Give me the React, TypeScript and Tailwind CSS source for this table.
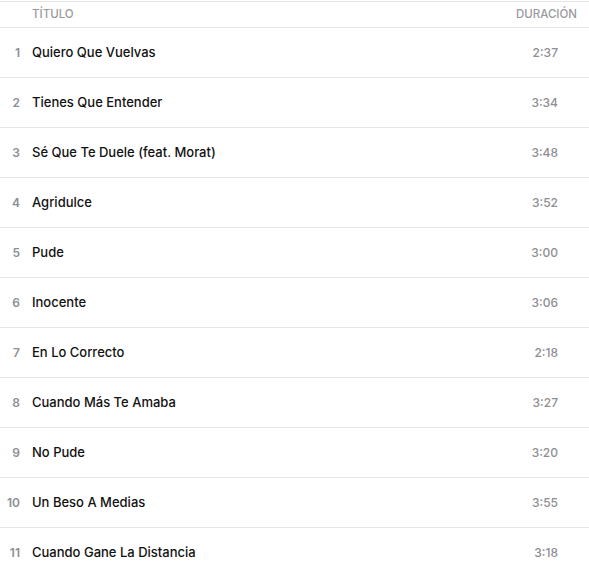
import React from 'react';

const tracks = [
  { n: 1, title: 'Quiero Que Vuelvas', time: '2:37' },
  { n: 2, title: 'Tienes Que Entender', time: '3:34' },
  { n: 3, title: 'Sé Que Te Duele (feat. Morat)', time: '3:48' },
  { n: 4, title: 'Agridulce', time: '3:52' },
  { n: 5, title: 'Pude', time: '3:00' },
  { n: 6, title: 'Inocente', time: '3:06' },
  { n: 7, title: 'En Lo Correcto', time: '2:18' },
  { n: 8, title: 'Cuando Más Te Amaba', time: '3:27' },
  { n: 9, title: 'No Pude', time: '3:20' },
  { n: 10, title: 'Un Beso A Medias', time: '3:55' },
  { n: 11, title: 'Cuando Gane La Distancia', time: '3:18' },
];

export default function App() {
  return (
    <div className="w-[589px] h-[569px] overflow-hidden bg-white pt-px font-['Inter',sans-serif]">
      {/* Header */}
      <div className="flex items-center h-[27px] border-t border-b border-[#e5e5e5] text-[11.5px] font-medium uppercase text-[#9a9aa0]">
        <span className="w-[32px] shrink-0" />
        <span className="flex-1">Título</span>
        <span className="pr-[12px]">Duración</span>
      </div>

      {tracks.map((t) => (
        <div
          key={t.n}
          className="flex items-center h-[50px] border-b border-[#e5e5e5]"
        >
          <span className="w-[20px] shrink-0 text-right text-[12px] font-semibold text-[#8e8e93]">
            {t.n}
          </span>
          <span className="w-[12px] shrink-0" />
          <span className="flex-1 text-[13px] font-medium text-[#111]">{t.title}</span>
          <span className="w-[60px] pr-[31px] text-right text-[12px] font-medium text-[#8e8e93]">
            {t.time}
          </span>
        </div>
      ))}
    </div>
  );
}
